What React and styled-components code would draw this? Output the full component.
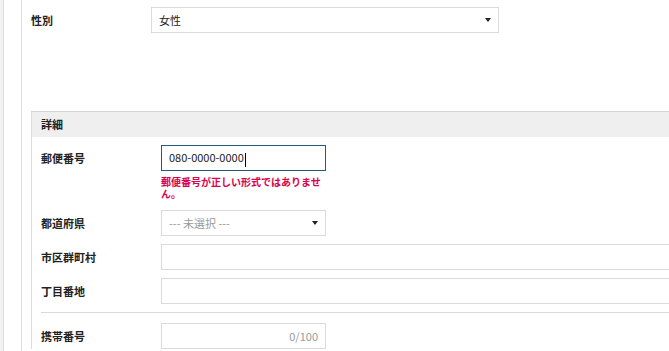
import React from 'react';
import styled, { createGlobalStyle } from 'styled-components';

const GlobalStyle = createGlobalStyle`
    body {
        margin: 0;
        background: #f3f3f3;
        font-family: "Noto Sans CJK JP", "Noto Sans", sans-serif;
        color: #222;
    }
`;

const Page = styled.div`
    width: 669px;
    height: 351px;
    overflow: hidden;
    display: flex;
`;

const Panel = styled.div`
    margin-left: 3px;
    flex: 1;
    background: #fff;
    border-left: 1px solid #dcdcdc;
    padding-left: 17px;
`;

const Inner = styled.div`
    width: 700px;
    min-height: 100%;
    border-left: 1px solid #dcdcdc;
    padding: 7px 0 0 9px;
    box-sizing: border-box;
`;

const Row = styled.div`
    display: flex;
    align-items: flex-start;
    margin-bottom: 8px;
`;

const Label = styled.div`
    width: 120px;
    flex-shrink: 0;
    font-size: 11px;
    font-weight: bold;
    line-height: 26px;
`;

const Section = styled.div`
    margin-top: 78px;
    border-top: 1px solid #d4d4d4;
    border-left: 1px solid #dcdcdc;
`;

const SectionHeader = styled.div`
    height: 25px;
    line-height: 25px;
    background: #efefef;
    padding-left: 9px;
    font-size: 11px;
    font-weight: bold;
`;

const SectionBody = styled.div`
    padding: 8px 0 0 9px;
`;

const Field = styled.div`
    width: ${(p) => p.width}px;
    height: 26px;
    box-sizing: border-box;
    border: 1px solid ${(p) => (p.focused ? '#1d5c7c' : '#dadada')};
    background: #fff;
    display: flex;
    align-items: center;
    justify-content: ${(p) => (p.alignRight ? 'flex-end' : 'space-between')};
    padding: 0 7px;
    font-size: 11px;
    color: ${(p) => (p.muted ? '#9a9a9a' : '#222')};
`;

const Caret = styled.span`
    display: inline-block;
    width: 1px;
    height: 14px;
    background: #000;
    margin-left: 1px;
    vertical-align: middle;
`;

const Arrow = styled.span`
    width: 0;
    height: 0;
    border-left: 3.5px solid transparent;
    border-right: 3.5px solid transparent;
    border-top: 4px solid #222;
`;

const FieldColumn = styled.div`
    display: flex;
    flex-direction: column;
`;

const ErrorText = styled.div`
    width: 164px;
    margin-top: 5px;
    padding-bottom: 2px;
    font-size: 10px;
    line-height: 12px;
    font-weight: bold;
    color: #d9004c;
`;

const Divider = styled.div`
    height: 1px;
    background: #d9d9d9;
    margin: 2px 0 10px;
`;

const Select = ({ value, width, muted }) => (
    <Field width={width} muted={muted}>
        <span>{value}</span>
        <Arrow />
    </Field>
);

const App = () => {
    return (
        <Page>
            <GlobalStyle />
            <Panel>
                <Inner>
                    <Row>
                        <Label>性別</Label>
                        <Select value="女性" width={348} />
                    </Row>

                    <Section>
                        <SectionHeader>詳細</SectionHeader>
                        <SectionBody>
                            <Row>
                                <Label>郵便番号</Label>
                                <FieldColumn>
                                    <Field width={165} focused>
                                        <span>080-0000-0000<Caret /></span>
                                    </Field>
                                    <ErrorText>郵便番号が正しい形式ではありません。</ErrorText>
                                </FieldColumn>
                            </Row>
                            <Row>
                                <Label>都道府県</Label>
                                <Select value="--- 未選択 ---" width={165} muted />
                            </Row>
                            <Row>
                                <Label>市区群町村</Label>
                                <Field width={560} />
                            </Row>
                            <Row>
                                <Label>丁目番地</Label>
                                <Field width={560} />
                            </Row>
                            <Divider />
                            <Row>
                                <Label>携帯番号</Label>
                                <Field width={165} muted alignRight>0/100</Field>
                            </Row>
                        </SectionBody>
                    </Section>
                </Inner>
            </Panel>
        </Page>
    );
};

export default App;
